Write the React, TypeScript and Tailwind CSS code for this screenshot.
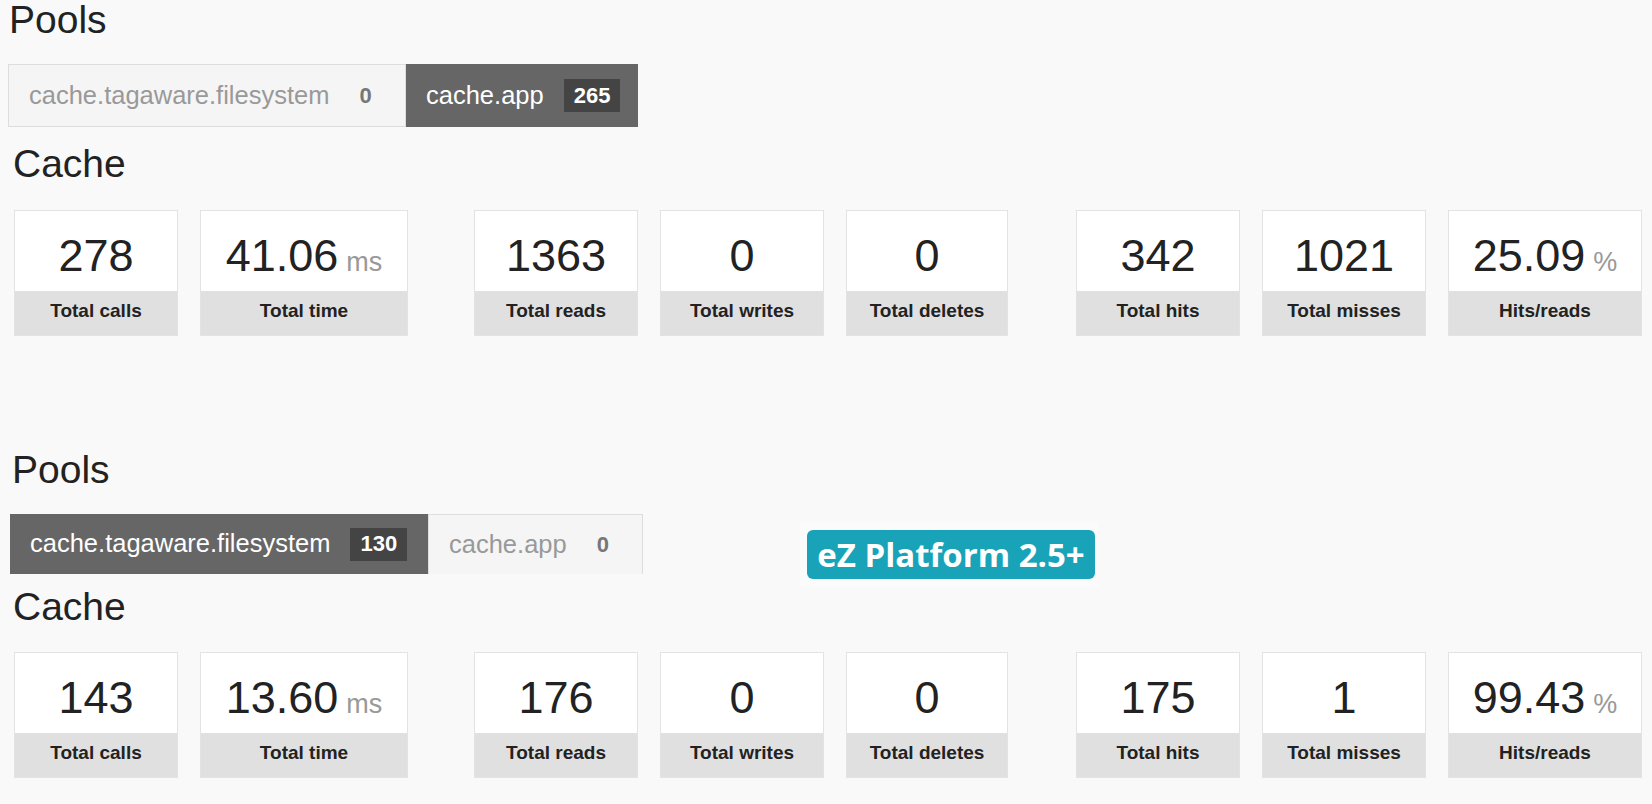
import React from "react";

type Tab = { name: string; count: number; active: boolean; w: string };
type Stat = { value: string; unit?: string; label: string; w: string; ml: string };

function TabBar({ tabs, h, openBottom }: { tabs: Tab[]; h: string; openBottom?: boolean }) {
  return (
    <div className="flex">
      {tabs.map((t) =>
        t.active ? (
          <div key={t.name} className={`${t.w} ${h} flex items-center bg-[#666] pl-[20px] text-white`}>
            <span className="text-[25.5px] leading-none">{t.name}</span>
            <span className="ml-[20px] flex h-[33px] items-center bg-[#444] px-[10px] text-[22px] font-bold leading-none text-white">
              {t.count}
            </span>
          </div>
        ) : (
          <div
            key={t.name}
            className={`${t.w} ${h} flex items-center border-[#dddddd] bg-[#f5f5f5] pl-[20px] text-[#999] ${
              openBottom ? "border-x border-t" : "border"
            }`}
          >
            <span className="text-[25.5px] leading-none">{t.name}</span>
            <span className="ml-[20px] flex h-[33px] items-center px-[10px] text-[22px] font-bold leading-none text-[#777]">
              {t.count}
            </span>
          </div>
        )
      )}
    </div>
  );
}

function Card({ s }: { s: Stat }) {
  return (
    <div className={`${s.w} ${s.ml} flex shrink-0 flex-col border border-[#e3e3e3] bg-white`}>
      <div className="flex h-[80px] items-center justify-center pt-[8px]">
        <span className="text-[45px] leading-none text-[#222]">
          {s.value}
          {s.unit ? <span className="ml-[8px] text-[27px] leading-none text-[#999]">{s.unit}</span> : null}
        </span>
      </div>
      <div className="h-[44px] bg-[#e0e0e0] text-center text-[19px] font-bold leading-[39px] text-[#222]">
        {s.label}
      </div>
    </div>
  );
}

function Section({
  tabs,
  stats,
  first,
}: {
  tabs: Tab[];
  stats: Stat[];
  first: boolean;
}) {
  return (
    <section>
      <h2
        className={`text-[39px] font-normal leading-none text-[#222] ${
          first ? "ml-[9px]" : "ml-[12px] mt-[114px]"
        }`}
      >
        Pools
      </h2>
      <div className={first ? "ml-[8px] mt-[25px]" : "ml-[10px] mt-[25px]"}>
        <TabBar tabs={tabs} h={first ? "h-[63px]" : "h-[60px]"} openBottom={!first} />
      </div>
      <h2
        className={`ml-[13px] text-[39px] font-normal leading-none text-[#222] ${
          first ? "mt-[17px]" : "mt-[13px]"
        }`}
      >
        Cache
      </h2>
      <div className={`ml-[14px] flex ${first ? "mt-[27px]" : "mt-[26px]"}`}>
        {stats.map((s) => (
          <Card key={s.label} s={s} />
        ))}
      </div>
    </section>
  );
}

const W = ["w-[164px]", "w-[208px]", "w-[164px]", "w-[164px]", "w-[162px]", "w-[164px]", "w-[164px]", "w-[194px]"];
const ML = ["ml-0", "ml-[22px]", "ml-[66px]", "ml-[22px]", "ml-[22px]", "ml-[68px]", "ml-[22px]", "ml-[22px]"];
const LABELS = [
  "Total calls",
  "Total time",
  "Total reads",
  "Total writes",
  "Total deletes",
  "Total hits",
  "Total misses",
  "Hits/reads",
];

function makeStats(values: string[]): Stat[] {
  return values.map((v, i) => ({
    value: v,
    unit: i === 1 ? "ms" : i === 7 ? "%" : undefined,
    label: LABELS[i],
    w: W[i],
    ml: ML[i],
  }));
}

export default function App() {
  const stats1 = makeStats(["278", "41.06", "1363", "0", "0", "342", "1021", "25.09"]);
  const stats2 = makeStats(["143", "13.60", "176", "0", "0", "175", "1", "99.43"]);
  return (
    <div className="relative min-h-screen w-full bg-[#f9f9f9] font-['Liberation_Sans',Arial,Helvetica,sans-serif] text-[#222]">
      <Section
        first
        tabs={[
          { name: "cache.tagaware.filesystem", count: 0, active: false, w: "w-[398px]" },
          { name: "cache.app", count: 265, active: true, w: "w-[232px]" },
        ]}
        stats={stats1}
      />
      <Section
        first={false}
        tabs={[
          { name: "cache.tagaware.filesystem", count: 130, active: true, w: "w-[418px]" },
          { name: "cache.app", count: 0, active: false, w: "w-[215px]" },
        ]}
        stats={stats2}
      />
      <div className="absolute left-[800px] top-[522px] flex h-[65px] w-[299px] items-start bg-[#fbfbfb] pl-[7px] pt-[8px]">
        <div className="flex h-[49px] w-[288px] items-center justify-center rounded-[6px] bg-[#19a3b9] font-['Open_Sans',sans-serif] text-[33px] font-bold leading-none text-white">
          eZ Platform 2.5+
        </div>
      </div>
    </div>
  );
}
